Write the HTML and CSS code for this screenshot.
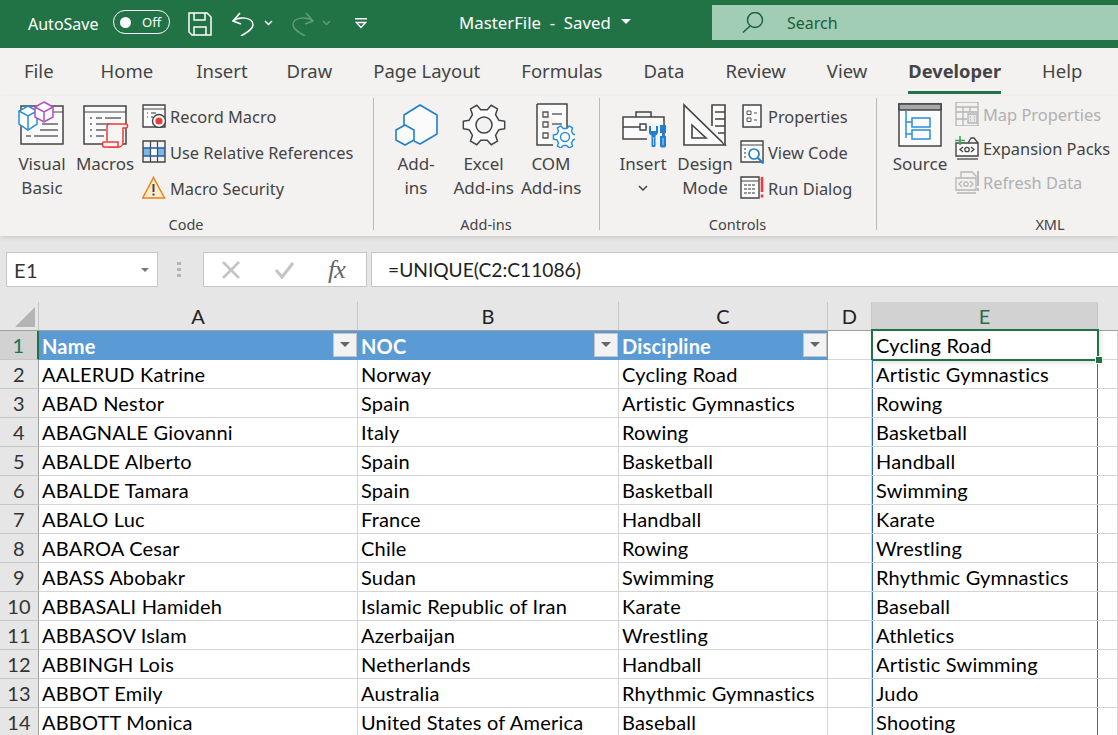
FILE: index.html
```html
<!DOCTYPE html>
<html>
  <head>
    <meta charset="utf-8">
    <title>MasterFile - Excel</title>
    <link rel="stylesheet" href="styles.css">
  </head>
  <body>
    <svg class="defs" width="0" height="0">
      <defs>
        <polygon id="gear" points="14.74,-4.79 20.68,-3.65 20.68,3.65 14.74,4.79 11.52,10.37 13.5,16.09 7.18,19.73 3.22,15.16 -3.22,15.16 -7.18,19.73 -13.5,16.09 -11.52,10.37 -14.74,4.79 -20.68,3.65 -20.68,-3.65 -14.74,-4.79 -11.52,-10.37 -13.5,-16.09 -7.18,-19.73 -3.22,-15.16 3.22,-15.16 7.18,-19.73 13.5,-16.09 11.52,-10.37"/>
      </defs>
    </svg>

    <header class="titlebar">
      <span class="autosave">AutoSave</span>
      <span class="toggle"><i class="knob"></i><span>Off</span></span>
      <svg class="qa qa-save" width="24" height="24" viewBox="0 0 24 24" fill="none" stroke="#fff" stroke-width="1.5">
        <path d="M1 1h18l4 4v18H4l-3-3z"/><path d="M6 1v7h11V1"/><path d="M6 23v-8h12v8"/>
      </svg>
      <svg class="qa qa-undo" width="23" height="24" viewBox="0 0 23 24" fill="none" stroke="#fff" stroke-width="1.5">
        <path d="M8 1L1 9l8 3"/><path d="M1 9c6-5 20-4 20 4 0 4-5 7-12 11"/>
      </svg>
      <svg class="qa qa-chev" width="9" height="6" viewBox="0 0 9 6" fill="none" stroke="#fff" stroke-width="1.5"><path d="M1 1l3.5 3.5L8 1"/></svg>
      <svg class="qa qa-redo" width="23" height="24" viewBox="0 0 23 24" fill="none" stroke="#5f9c7c" stroke-width="1.5">
        <path d="M15 1l7 8-8 3"/><path d="M22 9c-6-5-20-4-20 4 0 4 5 7 12 11"/>
      </svg>
      <svg class="qa qa-chev2" width="9" height="6" viewBox="0 0 9 6" fill="none" stroke="#5f9c7c" stroke-width="1.5"><path d="M1 1l3.5 3.5L8 1"/></svg>
      <svg class="qa qa-more" width="12" height="11" viewBox="0 0 12 11"><path d="M0 0h12v1.5H0z" fill="#fff"/><path d="M1.5 4.5h9L6 9.5z" fill="none" stroke="#fff" stroke-width="1.4"/></svg>
      <span class="doc-name">MasterFile &nbsp;-&nbsp; Saved</span>
      <i class="doc-caret"></i>
      <div class="searchbox">
        <svg width="22" height="21" viewBox="0 0 22 21" fill="none" stroke="#1f5b3c" stroke-width="1.4"><circle cx="13" cy="8" r="7.5"/><path d="M8 14L1 20.5"/></svg>
        <span>Search</span>
      </div>
    </header>

    <nav class="tabs">
      <span class="tab tab-file">File</span>
      <span class="tab">Home</span>
      <span class="tab">Insert</span>
      <span class="tab">Draw</span>
      <span class="tab">Page Layout</span>
      <span class="tab">Formulas</span>
      <span class="tab">Data</span>
      <span class="tab">Review</span>
      <span class="tab">View</span>
      <span class="tab active">Developer</span>
      <span class="tab">Help</span>
    </nav>

    <section class="ribbon">
      <div class="group group-code">
        <div class="group-body">
          <div class="big">
            <svg width="48" height="48" viewBox="0 0 48 48" fill="none">
              <path d="M3 6h42v38H3z" fill="#fafafa" stroke="#444" stroke-width="1.5"/>
              <path d="M3 12h42" stroke="#444" stroke-width="1.2"/>
              <path d="M24 24h16M22 30h18M8 36h5M16 36h24" stroke="#666" stroke-width="1.5"/>
              <path d="M10 6l9 5v13l-9 6-9-6V11z" fill="#fff" stroke="#2b8fd8" stroke-width="1.5"/>
              <path d="M1 11l9 5 9-5M10 16v14" stroke="#2b8fd8" stroke-width="1.5"/>
              <path d="M26 2l9 5v10l-9 5-9-5V7z" fill="#fff" stroke="#b24fc4" stroke-width="1.5"/>
              <path d="M17 7l9 5 9-5M26 12v10" stroke="#b24fc4" stroke-width="1.5"/>
            </svg>
            <span>Visual<br>Basic</span>
          </div>
          <div class="big">
            <svg width="48" height="48" viewBox="0 0 48 48" fill="none">
              <path d="M3 6h42v38H3z" fill="#fafafa" stroke="#444" stroke-width="1.5"/>
              <path d="M3 12h42" stroke="#444" stroke-width="1.2"/>
              <path d="M9 18h2M15 18h6M24 18h16M9 24h2M15 24h14M9 30h2M15 30h10M9 36h2M15 36h8" stroke="#666" stroke-width="1.5"/>
              <path d="M28 24h17c2 0 2 4 0 4h-3v14c0 3-2 5-4 5H27" fill="#f7f5f4" stroke="#f03a3a" stroke-width="1.5"/>
              <path d="M28 24c-2 0-2 3-2 3v14" fill="none" stroke="#f03a3a" stroke-width="1.5"/>
              <path d="M23 42h14v5H23c-2 0-2-5 0-5z" fill="#f7f5f4" stroke="#f03a3a" stroke-width="1.5"/>
            </svg>
            <span>Macros</span>
          </div>
          <ul class="small-list">
            <li>
              <svg width="24" height="24" viewBox="0 0 24 24" fill="none">
                <path d="M1 1h22v22H1z" fill="#fafafa" stroke="#444" stroke-width="1.4"/><path d="M1 5h22" stroke="#444"/>
                <path d="M5 9h1M9 9h5M5 13h1M9 13h2" stroke="#777" stroke-width="1.3"/>
                <circle cx="17" cy="17" r="6.5" fill="#fff" stroke="#444" stroke-width="1.4"/><circle cx="17" cy="17" r="3.6" fill="#ee3a3a"/>
              </svg>
              <span>Record Macro</span>
            </li>
            <li>
              <svg width="24" height="24" viewBox="0 0 24 24" fill="none">
                <path d="M1 8h22v8H1z" fill="#7fb5e6"/><path d="M9 8h6v8H9z" fill="#fff"/>
                <path d="M1 1h22v21H1z" stroke="#444" stroke-width="1.4"/>
                <path d="M8.5 1v21M15.5 1v21" stroke="#444" stroke-width="1.2"/>
                <path d="M1 8h22M1 16h22" stroke="#1d5fa8" stroke-width="1.5"/>
              </svg>
              <span>Use Relative References</span>
            </li>
            <li>
              <svg width="24" height="24" viewBox="0 0 24 24" fill="none">
                <path d="M11.5 1.5L22.5 22H.7z" fill="#fdeccb" stroke="#e8811a" stroke-width="1.5"/>
                <path d="M11.5 8v8" stroke="#444" stroke-width="2"/><path d="M11.5 17.5v2" stroke="#444" stroke-width="2"/>
              </svg>
              <span>Macro Security</span>
            </li>
          </ul>
        </div>
        <div class="group-label">Code</div>
      </div>

      <div class="group group-addins">
        <div class="group-body">
          <div class="big">
            <svg width="48" height="48" viewBox="0 0 48 48" fill="none" stroke="#1f7fd0" stroke-width="1.6" stroke-linejoin="round">
              <path d="M12 25V15L28 5l17 10v19L28 44l-6-3" fill="#fbfbfb"/>
              <path d="M13 25l9 5v10l-9 5-9-5V30z" fill="#fbfbfb"/>
            </svg>
            <span>Add-<br>ins</span>
          </div>
          <div class="big">
            <svg width="48" height="48" viewBox="0 0 48 48" fill="none" stroke="#444" stroke-width="1.5" stroke-linejoin="round">
              <use href="#gear" x="24" y="25" fill="#fbfbfb"/>
              <circle cx="24" cy="25" r="8" fill="#f3f2f1"/>
            </svg>
            <span>Excel<br>Add-ins</span>
          </div>
          <div class="big">
            <svg width="48" height="48" viewBox="0 0 48 48" fill="none">
              <path d="M10 4h30v28M26 45H10V4" fill="#fbfbfb" stroke="#444" stroke-width="1.5"/>
              <path d="M16 12h5v5h-5zM16 22h5v5h-5zM16 33h5v5h-5z" stroke="#555" stroke-width="1.3"/>
              <path d="M25 14h10M25 24h10" stroke="#666" stroke-width="1.5"/>
              <g transform="translate(38 37) scale(.56)" stroke="#2b8fd8" stroke-width="2.6" stroke-linejoin="round">
                <use href="#gear" fill="#fff"/>
                <circle r="8" fill="#fff"/>
              </g>
            </svg>
            <span>COM<br>Add-ins</span>
          </div>
        </div>
        <div class="group-label">Add-ins</div>
      </div>

      <div class="group group-controls">
        <div class="group-body">
          <div class="big">
            <svg width="48" height="48" viewBox="0 0 48 48" fill="none">
              <path d="M4 17h41v22H4z" fill="#fbfbfb" stroke="#444" stroke-width="1.5"/>
              <path d="M17 17v-5h15v5" stroke="#444" stroke-width="1.5"/>
              <path d="M4 27h17M27 27h3" stroke="#444" stroke-width="1.4"/>
              <path d="M21 24h6v6h-6z" fill="#fff" stroke="#444" stroke-width="1.4"/>
              <path d="M28 24h13v24H28z" fill="#f3f2f1"/>
              <path d="M30 26h2v5h5v-5h2v6c0 2-1 3-2.500 3.500V46c0 1.500-4 1.500-4 0V35.500C31 35 30 34 30 32z" fill="#1f7fd0"/>
              <path d="M34.500 37v8" stroke="#9cc9ee" stroke-width="1.200"/>
              <path d="M41 25h6v8h-2v3h2v10c0 2-6 2-6 0V36h2v-3h-2z" fill="#1f7fd0"/>
              <path d="M44 38v7" stroke="#9cc9ee" stroke-width="1.200"/>
            </svg>
            <span>Insert<br><svg class="chev" width="10" height="6" viewBox="0 0 10 6" fill="none" stroke="#444" stroke-width="1.5"><path d="M1 1l4 4 4-4"/></svg></span>
          </div>
          <div class="big">
            <svg width="48" height="48" viewBox="0 0 48 48" fill="none" stroke="#444" stroke-width="1.6">
              <path d="M3 5v40h41z" fill="#fbfbfb"/>
              <path d="M11 25v13h14z"/>
              <path d="M31 26V5h13v40" fill="#fbfbfb"/>
              <path d="M34 12h10M34 19h10M34 26h10M37 33h7"/>
            </svg>
            <span>Design<br>Mode</span>
          </div>
          <ul class="small-list">
            <li>
              <svg width="24" height="24" viewBox="0 0 24 24" fill="none">
                <path d="M3 1h18v22H3z" fill="#fbfbfb" stroke="#444" stroke-width="1.5"/>
                <path d="M7 7h4v3.500H7zM7 14h4v3.500H7z" stroke="#555"/><path d="M14 9h3M14 16h3" stroke="#555" stroke-width="1.2"/>
              </svg>
              <span>Properties</span>
            </li>
            <li>
              <svg width="24" height="24" viewBox="0 0 24 24" fill="none">
                <path d="M1 1h22v21H1z" fill="#fbfbfb" stroke="#444" stroke-width="1.4"/><path d="M1 5h22" stroke="#444"/>
                <path d="M4 9h2M4 13h2M4 17h2" stroke="#777" stroke-width="1.3"/>
                <circle cx="14" cy="14" r="5" fill="#fff" stroke="#1f7fd0" stroke-width="1.7"/><path d="M18 18l5.500 5.500" stroke="#1f7fd0" stroke-width="2"/>
              </svg>
              <span>View Code</span>
            </li>
            <li>
              <svg width="24" height="24" viewBox="0 0 24 24" fill="none">
                <path d="M1 1h18v21H1z" fill="#fbfbfb" stroke="#444" stroke-width="1.4"/><path d="M1 5h18" stroke="#444"/>
                <path d="M4 9h12M4 13h12M4 17h12" stroke="#777" stroke-width="1.3" stroke-dasharray="3 1"/>
                <path d="M22 1v15M22 18.500v3" stroke="#ee3a3a" stroke-width="2.600"/>
              </svg>
              <span>Run Dialog</span>
            </li>
          </ul>
        </div>
        <div class="group-label">Controls</div>
      </div>

      <div class="group group-xml">
        <div class="group-body">
          <div class="big">
            <svg width="48" height="48" viewBox="0 0 48 48" fill="none">
              <path d="M3 4h42v42H3z" fill="#fbfbfb" stroke="#444" stroke-width="1.5"/>
              <path d="M3 4h42v6H3z" fill="#a8a8a8" stroke="#444" stroke-width="1.5"/>
              <path d="M10 11v27M10 22h6M10 34h6" stroke="#2b8fd8" stroke-width="1.5"/>
              <path d="M16 18h18v9H16zM16 30h18v9H16z" stroke="#2b8fd8" stroke-width="1.5"/>
            </svg>
            <span>Source</span>
          </div>
          <ul class="small-list small-list-xml">
            <li class="off">
              <svg width="24" height="24" viewBox="0 0 24 24" fill="none" stroke="#b5b5b5" stroke-width="1.300">
                <path d="M1 0h22v24H1z"/><path d="M1 5h22M1 10h22M1 17h11M8 5v19M15 5v5"/>
                <path d="M13 12h9v9h-9z" fill="#e8e8e8"/><path d="M15 15h1M19 15h1M15 18h1M19 18h1"/>
              </svg>
              <span>Map Properties</span>
            </li>
            <li>
              <svg width="24" height="24" viewBox="0 0 24 24" fill="none">
                <path d="M1 7h22v13H1z" fill="#fbfbfb" stroke="#444" stroke-width="1.400"/>
                <path d="M13 7l3-5h3l4 5" stroke="#444" stroke-width="1.300"/>
                <path d="M2 23h21" stroke="#444" stroke-width="1.300"/>
                <path d="M8 11l-3 2.500L8 16M16 11l3 2.500-3 2.500" stroke="#444" stroke-width="1.300"/>
                <circle cx="12" cy="13.500" r="2.200" stroke="#444" stroke-width="1.300"/>
                <path d="M5 0v9M0 4.500h10" stroke="#3aa655" stroke-width="1.600"/>
              </svg>
              <span>Expansion Packs</span>
            </li>
            <li class="off">
              <svg width="24" height="24" viewBox="0 0 24 24" fill="none" stroke="#b5b5b5" stroke-width="1.300">
                <path d="M1 8h20v12H1zM2 23h19M6 8V2h11l4 4v2"/>
                <path d="M7 11l-3 3 3 3M15 11l3 3-3 3"/><circle cx="11" cy="14" r="2.200"/>
                <path d="M23 1v15M23 18v3" stroke-width="1.800"/>
              </svg>
              <span>Refresh Data</span>
            </li>
          </ul>
        </div>
        <div class="group-label">XML</div>
      </div>
    </section>

    <section class="formulabar">
      <div class="namebox"><span>E1</span><i class="caret"></i></div>
      <div class="grip"><i></i><i></i><i></i></div>
      <div class="fx-box">
        <svg width="20" height="18" viewBox="0 0 20 18" fill="none" stroke="#c4c4c4" stroke-width="2.600"><path d="M2 1l16 16M18 1L2 17"/></svg>
        <svg width="20" height="18" viewBox="0 0 20 18" fill="none" stroke="#c4c4c4" stroke-width="3"><path d="M2 9l6 7L19 2"/></svg>
        <span class="fx">fx</span>
      </div>
      <div class="formula">=UNIQUE(C2:C11086)</div>
    </section>

    <table class="sheet">
      <colgroup>
        <col class="c-row"><col class="c-a"><col class="c-b"><col class="c-c"><col class="c-d"><col class="c-e"><col class="c-f">
      </colgroup>
      <thead>
        <tr>
          <th class="corner"><i></i></th>
          <th>A</th><th>B</th><th>C</th><th>D</th><th class="cur">E</th><th></th>
        </tr>
      </thead>
      <tbody>
        <tr>
          <th class="cur">1</th>
          <td class="hd">Name<i class="filter"></i></td>
          <td class="hd">NOC<i class="filter"></i></td>
          <td class="hd">Discipline<i class="filter"></i></td>
          <td></td>
          <td class="selected">Cycling Road</td>
          <td></td>
        </tr>
        <tr><th>2</th><td>AALERUD Katrine</td><td>Norway</td><td>Cycling Road</td><td></td><td class="spill">Artistic Gymnastics</td><td></td></tr>
        <tr><th>3</th><td>ABAD Nestor</td><td>Spain</td><td>Artistic Gymnastics</td><td></td><td class="spill">Rowing</td><td></td></tr>
        <tr><th>4</th><td>ABAGNALE Giovanni</td><td>Italy</td><td>Rowing</td><td></td><td class="spill">Basketball</td><td></td></tr>
        <tr><th>5</th><td>ABALDE Alberto</td><td>Spain</td><td>Basketball</td><td></td><td class="spill">Handball</td><td></td></tr>
        <tr><th>6</th><td>ABALDE Tamara</td><td>Spain</td><td>Basketball</td><td></td><td class="spill">Swimming</td><td></td></tr>
        <tr><th>7</th><td>ABALO Luc</td><td>France</td><td>Handball</td><td></td><td class="spill">Karate</td><td></td></tr>
        <tr><th>8</th><td>ABAROA Cesar</td><td>Chile</td><td>Rowing</td><td></td><td class="spill">Wrestling</td><td></td></tr>
        <tr><th>9</th><td>ABASS Abobakr</td><td>Sudan</td><td>Swimming</td><td></td><td class="spill">Rhythmic Gymnastics</td><td></td></tr>
        <tr><th>10</th><td>ABBASALI Hamideh</td><td>Islamic Republic of Iran</td><td>Karate</td><td></td><td class="spill">Baseball</td><td></td></tr>
        <tr><th>11</th><td>ABBASOV Islam</td><td>Azerbaijan</td><td>Wrestling</td><td></td><td class="spill">Athletics</td><td></td></tr>
        <tr><th>12</th><td>ABBINGH Lois</td><td>Netherlands</td><td>Handball</td><td></td><td class="spill">Artistic Swimming</td><td></td></tr>
        <tr><th>13</th><td>ABBOT Emily</td><td>Australia</td><td>Rhythmic Gymnastics</td><td></td><td class="spill">Judo</td><td></td></tr>
        <tr><th>14</th><td>ABBOTT Monica</td><td>United States of America</td><td>Baseball</td><td></td><td class="spill">Shooting</td><td></td></tr>
      </tbody>
    </table>
  </body>
</html>
```

FILE: styles.css
```css
html, body {
  margin: 0;
  padding: 0;
  height: 735px;
  overflow: hidden;
  background: #fff;
  font-family: "Noto Sans", "Open Sans", sans-serif;
  color: #444;
}

.defs {
  position: absolute;
}

/* title bar */
.titlebar {
  display: flex;
  align-items: center;
  height: 48px;
  background: #217346;
  color: #fff;
  padding-left: 28px;
  font-size: 16px;
}

.autosave {
  width: 85px;
}

.toggle {
  display: flex;
  align-items: center;
  box-sizing: border-box;
  width: 57px;
  height: 24px;
  margin-top: -4px;
  border: 1px solid #fff;
  border-radius: 12px;
  font-size: 13px;
  padding-left: 6px;
}

.knob {
  width: 11px;
  height: 11px;
  border-radius: 50%;
  background: #fff;
  margin-right: 11px;
}

.qa {
  flex: none;
}

.qa-save { margin-left: 18px; }
.qa-undo { margin-left: 20px; }
.qa-chev { margin-left: 9px; margin-top: -2px; }
.qa-redo { margin-left: 18px; }
.qa-chev2 { margin-left: 8px; margin-top: -2px; }
.qa-more { margin-left: 24px; margin-top: -2px; }

.doc-name {
  margin-left: 92px;
  width: 151px;
  margin-top: -3px;
  font-size: 16.800px;
  white-space: nowrap;
}

.doc-caret {
  margin-left: 11px;
  margin-top: -5px;
  border-top: 5px solid #fff;
  border-left: 5px solid transparent;
  border-right: 5px solid transparent;
}

.searchbox {
  display: flex;
  align-items: center;
  gap: 23px;
  position: absolute;
  left: 712px;
  right: 0;
  top: 5px;
  height: 35px;
  background: #a0cdb4;
  color: #1f5b3c;
  padding-left: 30px;
}

/* tabs */
.tabs {
  display: flex;
  align-items: flex-start;
  gap: 41px;
  height: 48px;
  padding-left: 24px;
  background: #f3f2f1;
  font-size: 18.500px;
  line-height: 46px;
  white-space: nowrap;
}

.tab {
  height: 43px;
}

.tab-file {
  margin-right: 6px;
}

.tab:nth-child(2) {
  margin-right: 2px;
}

.tab:nth-child(3) {
  margin-right: -2px;
}

.tab.active {
  font-weight: 700;
  font-size: 18.300px;
  border-bottom: 3px solid #217346;
}

/* ribbon */
.ribbon {
  display: flex;
  height: 140px;
  background: #f3f2f1;
  overflow: hidden;
  box-shadow: 0 2px 4px #cfcfcf;
  position: relative;
}

.group {
  flex: none;
  position: relative;
  display: flex;
  flex-direction: column;
  box-sizing: border-box;
  padding-top: 4px;
}

.group:not(:last-child)::after {
  content: "";
  position: absolute;
  right: 0;
  top: 2px;
  bottom: 6px;
  width: 1px;
  background: #b8b8b8;
}

.group-code { width: 374px; }
.group-addins { width: 226px; }
.group-controls { width: 277px; }
.group-xml { width: 348px; }

.group-body {
  display: flex;
  font-size: 17px;
}

.group-code .group-body { gap: 3px; padding-left: 12px; }
.group-addins .group-body { gap: 7.500px; padding-left: 12px; }
.group-controls .group-body { gap: 2px; padding-left: 13px; }
.group-xml .group-body { padding-left: 13px; }

.big {
  flex: none;
  width: 60px;
  text-align: center;
  line-height: 24px;
  white-space: nowrap;
}

.big > svg {
  display: block;
  margin: 0 auto 4px;
}

.big .chev {
  display: inline-block;
  vertical-align: 3px;
}

.small-list {
  list-style: none;
  margin: -2px 0 0 4px;
  padding: 0;
  font-size: 16.400px;
}

.group-controls .small-list {
  margin-left: 3px;
}

.small-list li {
  display: flex;
  align-items: center;
  height: 36px;
  gap: 4px;
  white-space: nowrap;
}

.small-list-xml {
  margin-top: -3px;
  margin-left: 5px;
}

.small-list-xml li {
  height: 34px;
}

.small-list li.off {
  color: #b0b0b0;
}

.group-label {
  margin-top: auto;
  margin-bottom: 2px;
  padding-right: 2px;
  text-align: center;
  font-size: 14.500px;
  line-height: 20px;
}

/* formula bar */
.formulabar {
  display: flex;
  align-items: flex-start;
  height: 66px;
  box-sizing: border-box;
  padding: 16px 0 0 6px;
  background: #e6e6e6;
  font-family: Lato, "Liberation Sans", sans-serif;
}

.namebox, .fx-box, .formula {
  display: flex;
  align-items: center;
  box-sizing: border-box;
  height: 35px;
  background: #fff;
  border: 1px solid #c6c6c6;
}

.namebox {
  width: 152px;
  padding: 0 8px 0 7px;
  justify-content: space-between;
  font-size: 20px;
  letter-spacing: .5px;
  color: #333;
}

.caret {
  border-top: 4px solid #777;
  border-left: 4px solid transparent;
  border-right: 4px solid transparent;
}

.grip {
  display: flex;
  flex-direction: column;
  gap: 3px;
  width: 45px;
  padding: 10px 0 0 19px;
  box-sizing: border-box;
}

.grip i {
  width: 4px;
  height: 3px;
  background: #b5b5b5;
}

.fx-box {
  width: 164px;
  padding-left: 17px;
  gap: 33px;
}

.fx {
  font-family: "Liberation Serif", serif;
  font-style: italic;
  font-size: 26px;
  color: #666;
  margin-left: 1px;
  letter-spacing: -1px;
}

.formula {
  margin-left: 4px;
  flex: 1;
  padding-left: 16px;
  font-size: 19.200px;
  color: #222;
  border-right: 0;
}

/* sheet */
.sheet {
  table-layout: fixed;
  border-collapse: separate;
  border-spacing: 0;
  width: 1118px;
  font-family: Lato, "Liberation Sans", sans-serif;
  font-size: 20px;
  letter-spacing: .2px;
  color: #000;
}

.c-row { width: 39px; }
.c-a { width: 319px; }
.c-b { width: 261px; }
.c-c { width: 209px; }
.c-d { width: 44px; }
.c-e { width: 226px; }
.c-f { width: 20px; }

.sheet thead th {
  height: 29px;
  padding: 0;
  box-sizing: border-box;
  background: #e6e6e6;
  border-right: 1px solid #c6c6c6;
  border-bottom: 1px solid #9f9f9f;
  font-weight: 400;
  color: #222;
}

.sheet thead th:last-child {
  border-right: 0;
}

.sheet thead th.cur {
  background: #d2d2d2;
  color: #217346;
}

.sheet thead th.corner {
  position: relative;
}

.corner i {
  position: absolute;
  right: 3px;
  bottom: 3px;
  width: 0;
  height: 0;
  border-left: 20px solid transparent;
  border-bottom: 20px solid #b4b4b4;
}

.sheet tbody th {
  padding: 0;
  box-sizing: border-box;
  height: 29px;
  background: #e6e6e6;
  border-right: 1px solid #9f9f9f;
  border-bottom: 1px solid #c6c6c6;
  font-weight: 400;
  color: #333;
}

.sheet tbody th.cur {
  background: #d2d2d2;
  color: #217346;
  border-right: 2px solid #217346;
}

.sheet td {
  position: relative;
  box-sizing: border-box;
  height: 29px;
  padding: 0 0 0 3px;
  border-right: 1px solid #d4d4d4;
  border-bottom: 1px solid #d4d4d4;
  white-space: nowrap;
  overflow: hidden;
}

.sheet td.hd {
  background: #5b9bd5;
  color: #fff;
  font-weight: 700;
  border: 0;
}

.filter {
  position: absolute;
  right: 1px;
  top: 2px;
  width: 24px;
  height: 24px;
  box-sizing: border-box;
  background: #f2f2f2;
  border: 1px solid #c4c4c4;
}

.filter::after {
  content: "";
  position: absolute;
  left: 6px;
  top: 8px;
  border-top: 5px solid #666;
  border-left: 5px solid transparent;
  border-right: 5px solid transparent;
}

.sheet td.spill {
  box-shadow: inset 1px 0 #2f6eba, inset -1px 0 #2f6eba;
  padding-left: 4px;
  border-right: 0;
}

.sheet td.selected {
  overflow: visible;
  padding-left: 4px;
  border-right: 0;
}

.selected::after {
  content: "";
  position: absolute;
  left: -1px;
  top: -2px;
  width: 228px;
  height: 32px;
  box-sizing: border-box;
  border: 2px solid #217346;
  box-shadow: 2px 2px 4px rgba(0, 0, 0, .12);
}

.selected::before {
  content: "";
  position: absolute;
  z-index: 1;
  left: 223px;
  top: 25px;
  width: 6px;
  height: 6px;
  background: #217346;
  border: 1px solid #fff;
}
```
